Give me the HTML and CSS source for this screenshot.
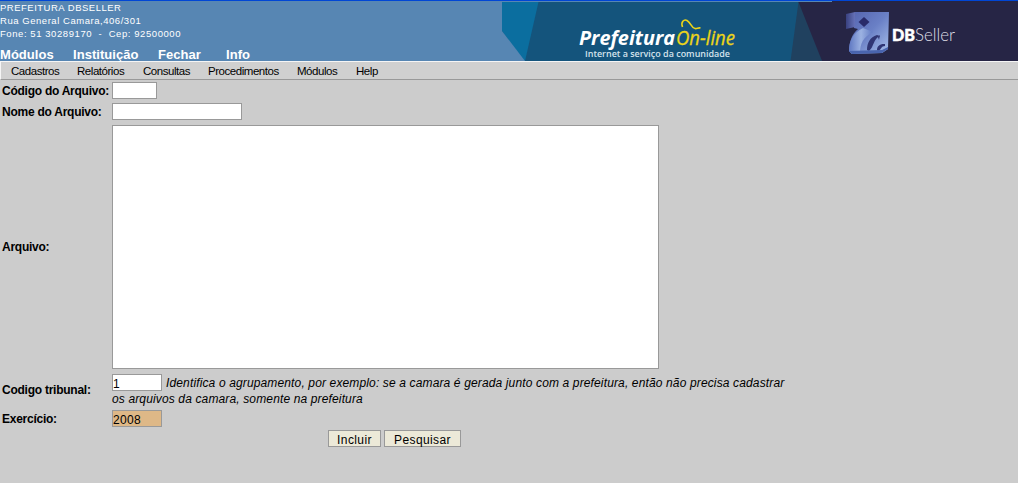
FILE: index.html
```html
<!DOCTYPE html>
<html lang="pt-BR">
<head>
<meta charset="utf-8">
<title>Prefeitura On-line</title>
<link rel="stylesheet" href="styles.css">
</head>
<body>
<header class="header">
  <div class="header-left">
    <div class="address">
      <div class="org">PREFEITURA DBSELLER</div>
      <div class="street">Rua General Camara,406/301</div>
      <div class="phone">Fone: 51 30289170 &nbsp;-&nbsp; Cep: 92500000</div>
    </div>
    <nav class="main-nav"><a>Módulos</a><a>Instituição</a><a>Fechar</a><a>Info</a></nav>
  </div>
  <svg class="banner" width="516" height="60" viewBox="502 1 516 60">
    <defs>
      <linearGradient id="face" x1="0" y1="0" x2="1" y2="1">
        <stop offset="0" stop-color="#5362ad"/><stop offset=".5" stop-color="#6a80c6"/><stop offset="1" stop-color="#a9c1eb"/>
      </linearGradient>
      <linearGradient id="leg" x1="0" y1="0" x2="1" y2="0">
        <stop offset="0" stop-color="#5f78c2"/><stop offset=".5" stop-color="#9cb2e2"/><stop offset="1" stop-color="#6079c2"/>
      </linearGradient>
      <linearGradient id="side" x1="0" y1="0" x2="1" y2="0">
        <stop offset="0" stop-color="#39417f"/><stop offset="1" stop-color="#6571b8"/>
      </linearGradient>
    </defs>
    <rect x="502" y="1" width="516" height="60" fill="#14547c"/>
    <path d="M502 2H538.500L525 61H524L502 31Z" fill="#0b6e9f"/>
    <path d="M502 31L525 61H502Z" fill="#5786b3"/>
    <path d="M798.500 2H803L822 61H790.500Z" fill="#20415f"/>
    <path d="M798.500 2H1018V61H822Z" fill="#262545"/>
    <path d="M832 1H1018V2H832Z" fill="#262545"/>
    <path d="M502 1H832V2H502Z" fill="#5786b3"/>
    <text class="logo-bold" x="579" y="45" textLength="96" lengthAdjust="spacingAndGlyphs">Prefeitura</text>
    <text class="logo-line" x="676" y="45" textLength="59" lengthAdjust="spacingAndGlyphs">On-line</text>
    <path d="M682.500 27C680.500 22 684 19 687 20.500C691 22.500 691 28 695 28.500C697 29 698 27.500 700.500 28" fill="none" stroke="#ecd519" stroke-width="1.600"/>
    <text class="logo-tag" x="585" y="56.500" textLength="145" lengthAdjust="spacingAndGlyphs">Internet a serviço da comunidade</text>
    <path d="M855 12H889L888 49L882 53L852 54L849 51C849 42 852 34 858 29L854 28Z" fill="url(#face)"/>
    <path d="M846 14L855 12V27L846 29Z" fill="url(#side)"/>
    <path d="M849 51C849 41 853 33 863 28L873 32C863 37 860 44 860 53L852 54Z" fill="url(#leg)"/>
    <path d="M864 17L869.500 22L864 27L858.500 22Z" fill="#292a69"/>
    <path d="M867 50C867 43 870 37 877 35L880 36C873 39 874 47 869 51Z" fill="#303674"/>
    <path d="M877 50C877 46 880 43.500 885 44L885 46C881 46 882 49 878 51Z" fill="#303674"/>
    <path d="M878 37L880 35L879 40Z" fill="#303674"/>
    <path d="M849 51L882 50L888 47V49L882 53L852 54Z" fill="#4964ae"/>
    <text class="brand-db" x="892" y="41" textLength="23" lengthAdjust="spacingAndGlyphs">DB</text>
    <text class="brand-seller" x="915" y="41" textLength="40" lengthAdjust="spacingAndGlyphs">Seller</text>
  </svg>
</header>
<nav class="menu-bar"><a>Cadastros</a><a>Relatórios</a><a>Consultas</a><a>Procedimentos</a><a>Módulos</a><a>Help</a></nav>
<main class="form">
  <div class="row row-code"><label>Código do Arquivo:</label><input class="field field-code"></div>
  <div class="row row-name"><label>Nome do Arquivo:</label><input class="field field-name"></div>
  <div class="row row-file"><label>Arquivo:</label><textarea class="field field-file"></textarea></div>
  <div class="row row-court"><label>Codigo tribunal:</label>
    <div class="court"><div class="court-line"><input class="field field-short" value="1"><i>Identifica o agrupamento, por exemplo: se a camara é gerada junto com a prefeitura, então não precisa cadastrar</i></div><i class="hint-rest">os arquivos da camara, somente na prefeitura</i></div>
  </div>
  <div class="row row-year"><label>Exercício:</label><input class="field field-short field-year" value="2008"></div>
  <div class="actions"><button class="btn btn-add">Incluir</button><button class="btn btn-search">Pesquisar</button></div>
</main>
</body>
</html>
```
FILE: styles.css
```css
* { box-sizing: border-box; }
body {
  margin: 0;
  height: 483px;
  overflow: hidden;
  background: #ccc;
  color: #000;
  font-family: "Liberation Sans", Arial, sans-serif;
  font-size: 12px;
}
.header {
  display: flex;
  justify-content: space-between;
  height: 61px;
  border-top: 1px solid #0046d5;
  background: #5786b3;
  color: #fff;
}
.header-left { white-space: nowrap; }
.address { height: 45px; font-size: 9.5px; line-height: 13px; }
.org { letter-spacing: .5px; }
.street { letter-spacing: .54px; }
.phone { letter-spacing: .57px; }
.main-nav {
  display: grid;
  grid-template-columns: 73px 85px 68px auto;
  padding-top: 1px;
  font-size: 13px;
  font-weight: bold;
  line-height: 16px;
  letter-spacing: .05px;
}
.banner { display: block; flex: none; }
.logo-bold { font: italic bold 20px "Open Sans", sans-serif; fill: #fff; }
.logo-line { font: italic 20px "Open Sans", sans-serif; fill: #ecd519; stroke: #ecd519; stroke-width: .3px; }
.logo-tag { font: 600 9.5px "Open Sans", sans-serif; fill: #d5e3ec; }
.brand-db { font: 900 17px Lato, sans-serif; fill: #fff; stroke: #fff; stroke-width: .5px; }
.brand-seller { font: 300 18px Lato, sans-serif; fill: #dedee6; }
.menu-bar {
  display: grid;
  grid-template-columns: 66px 66px 65px 89px 59px auto;
  height: 19px;
  padding-left: 10px;
  border-top: 1px solid #f5f5f5;
  border-left: 1px solid #f5f5f5;
  border-bottom: 1px solid #999;
  background: #d0d0d0;
  font-size: 11.5px;
  line-height: 18px;
  letter-spacing: -.46px;
}
.form { padding: 2px 0 0 2px; }
.row { display: grid; grid-template-columns: 110px 1fr; align-items: center; }
.row label { font-weight: bold; white-space: nowrap; letter-spacing: -.25px; }
.row-code { height: 17px; margin-bottom: 4px; }
.row-name { height: 17px; margin-bottom: 5px; }
.row-file { height: 244px; margin-bottom: 5px; }
.row-court { height: 33px; margin-bottom: 3px; }
.row-court label { padding-bottom: 2px; }
.row-year { height: 17px; margin-bottom: 3px; }
.field {
  display: block;
  height: 17px;
  margin: 0;
  padding: 2px 0 0;
  border: 1px solid #999;
  border-radius: 0;
  outline: 0;
  background: #fff;
  font: 12px "Liberation Sans", Arial, sans-serif;
  letter-spacing: .3px;
  resize: none;
}
.field-code { width: 45px; }
.field-name { width: 130px; }
.field-file { width: 547px; height: 244px; }
.field-short { width: 50px; flex: none; }
.field-year { background: #deb887; }
.court { height: 33px; white-space: nowrap; letter-spacing: .138px; }
.court-line { display: flex; gap: 4px; height: 17px; line-height: 19px; }
.hint-rest { display: block; line-height: 16px; }
.actions { display: flex; gap: 3px; padding-left: 326px; }
.btn {
  height: 17px;
  margin: 0;
  padding: 3px 0 0;
  border: 1px solid #999;
  border-radius: 0;
  background: #ece9d8;
  color: #000;
  font: 12px/13px "Liberation Sans", Arial, sans-serif;
  letter-spacing: .4px;
}
.btn-add { width: 53px; }
.btn-search { width: 77px; }
```
